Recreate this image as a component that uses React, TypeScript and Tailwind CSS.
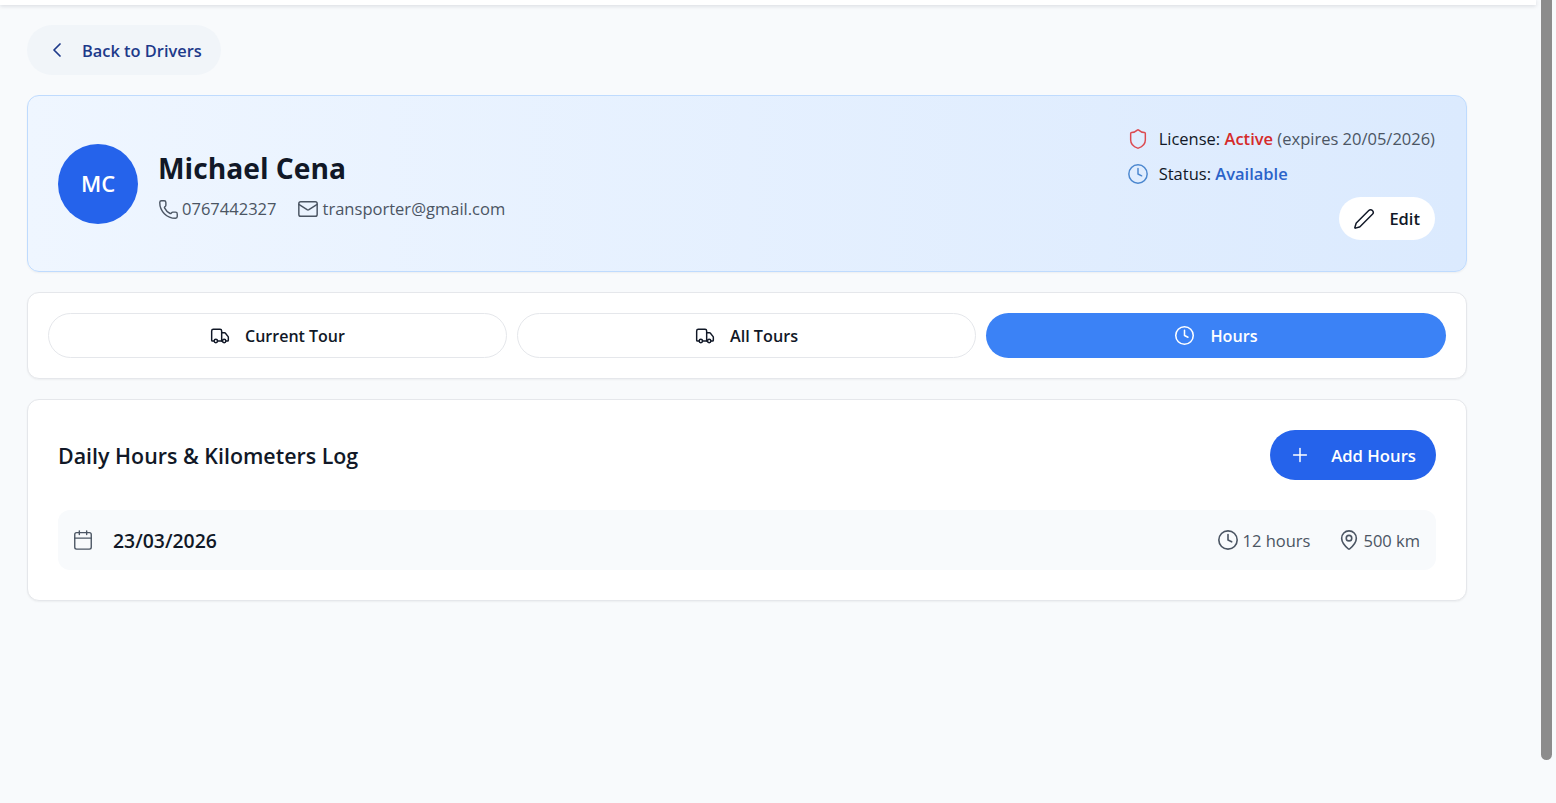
import React from "react";
import { ChevronLeft, Phone, Mail, Shield, Clock, Pen, Truck, Plus, Calendar, MapPin } from "lucide-react";

const font = "font-['Open_Sans','Noto_Sans',sans-serif]";

export default function App() {
  return (
    <div className={`flex h-[803px] overflow-hidden bg-[#f8fafc] ${font}`}>
      <div className="flex w-[1536px] shrink-0 flex-col">
        <div className="h-[5px] bg-white shadow-[0_1px_4px_rgba(15,23,42,0.14)]" />
        <main className="w-[1467px] pl-[27px] pt-5">
          <button className="flex h-[50px] items-center gap-[13px] rounded-full bg-[#f1f5f9] pl-[18px] pr-[19px] text-[16.4px] font-semibold text-[#1e3a8a]">
            <ChevronLeft size={24} strokeWidth={1.75} />
            <span className="mt-[2px]">Back to Drivers</span>
          </button>

          <section className="mt-5 flex h-[177px] items-start justify-between rounded-xl border border-[#bfdbfe] bg-gradient-to-r from-[#eff6ff] to-[#dbeafe] pl-[30px] pr-[31px] pt-[31px] shadow-[0_1px_2px_rgba(0,0,0,0.05)]">
            <div className="mt-[17px] flex items-center gap-5">
              <div className="flex size-20 items-center justify-center rounded-full bg-[#2563eb] pb-[2px] text-[22px] font-semibold text-white">MC</div>
              <div className="mt-[2px]">
                <h1 className="pt-px text-[28.2px] font-bold leading-9 text-[#111827]">Michael Cena</h1>
                <div className="mt-[11px] flex items-center gap-5 text-[16.55px] text-[#4b5563]">
                  <span className="flex items-center gap-[3px]"><Phone size={21} strokeWidth={1.6} />0767442327</span>
                  <span className="flex items-center gap-[4px]"><Mail size={22} strokeWidth={1.6} />transporter@gmail.com</span>
                </div>
              </div>
            </div>
            <div className="flex flex-col items-end">
              <div className="flex h-6 items-center gap-2.5 text-[16.5px] text-[#111827]">
                <Shield size={22} className="text-[#dc4a50]" strokeWidth={1.6} />
                <span>License: <span className="font-semibold text-[#d52a2a]">Active</span> <span className="text-[#4b5563]">(expires 20/05/2026)</span></span>
              </div>
              <div className="mt-[11px] flex h-6 items-center gap-2.5 self-start text-[16.5px] text-[#111827]">
                <Clock size={22} className="text-[#4b87cf]" strokeWidth={1.6} />
                <span>Status: <span className="font-semibold text-[#2b63c9]">Available</span></span>
              </div>
              <button className="mt-[11px] flex h-[43px] items-center gap-[14px] rounded-full bg-white pl-[14px] pr-[15px] text-[16.5px] font-semibold text-[#111827]">
                <Pen size={22} strokeWidth={1.6} /><span className="mt-[2px]">Edit</span>
              </button>
            </div>
          </section>

          <nav className="mt-5 grid h-[87px] grid-cols-[459px_459px_1fr] gap-2.5 rounded-xl border border-[#e5e7eb] bg-white p-5 shadow-[0_1px_2px_rgba(0,0,0,0.05)]">
            <button className="flex items-center justify-center gap-[15px] rounded-full border border-[#e5e7eb] bg-white text-[16px] font-semibold text-[#111827]">
              <Truck size={20} strokeWidth={1.75} />Current Tour
            </button>
            <button className="flex items-center justify-center gap-[15px] rounded-full border border-[#e5e7eb] bg-white text-[16.2px] font-semibold text-[#111827]">
              <Truck size={20} strokeWidth={1.75} /><span className="mt-[2px]">All Tours</span>
            </button>
            <button className="flex items-center justify-center gap-[15px] rounded-full bg-[#3b82f6] text-[16.2px] font-semibold text-white">
              <Clock size={21} strokeWidth={1.75} /><span className="mt-[2px]">Hours</span>
            </button>
          </nav>

          <section className="mt-5 rounded-xl border border-[#e5e7eb] bg-white p-[30px] shadow-[0_1px_2px_rgba(0,0,0,0.05)]">
            <div className="flex items-center justify-between">
              <h2 className="mt-[2px] text-[21.4px] font-semibold text-[#111827]">Daily Hours &amp; Kilometers Log</h2>
              <button className="flex h-[50px] items-center gap-[20px] rounded-full bg-[#2563eb] pl-[19px] pr-5 text-[16.7px] font-semibold text-white">
                <Plus size={22} strokeWidth={1.6} /><span className="mt-[2px]">Add Hours</span>
              </button>
            </div>
            <div className="mt-[30px] flex h-[60px] items-center justify-between rounded-xl bg-[#f8fafc] pl-[14px] pr-[16px]">
              <div className="flex items-center gap-[19px]">
                <Calendar size={22} strokeWidth={1.5} className="text-[#4b5563]" />
                <span className="mt-[2px] text-[19.4px] font-semibold text-[#111827]">23/03/2026</span>
              </div>
              <div className="flex items-center gap-[28px] text-[16.5px] text-[#4b5563]">
                <span className="flex items-center gap-[4px]"><Clock size={22} strokeWidth={1.75} /><span className="mt-[2px]">12 hours</span></span>
                <span className="flex items-center gap-[3px]"><MapPin size={22} strokeWidth={1.75} /><span className="mt-[2px]">500 km</span></span>
              </div>
            </div>
          </section>
        </main>
      </div>
      <div className="ml-[5px] h-[760px] w-[11px] shrink-0 rounded-b-full bg-[#8c8c8c]" />
    </div>
  );
}
